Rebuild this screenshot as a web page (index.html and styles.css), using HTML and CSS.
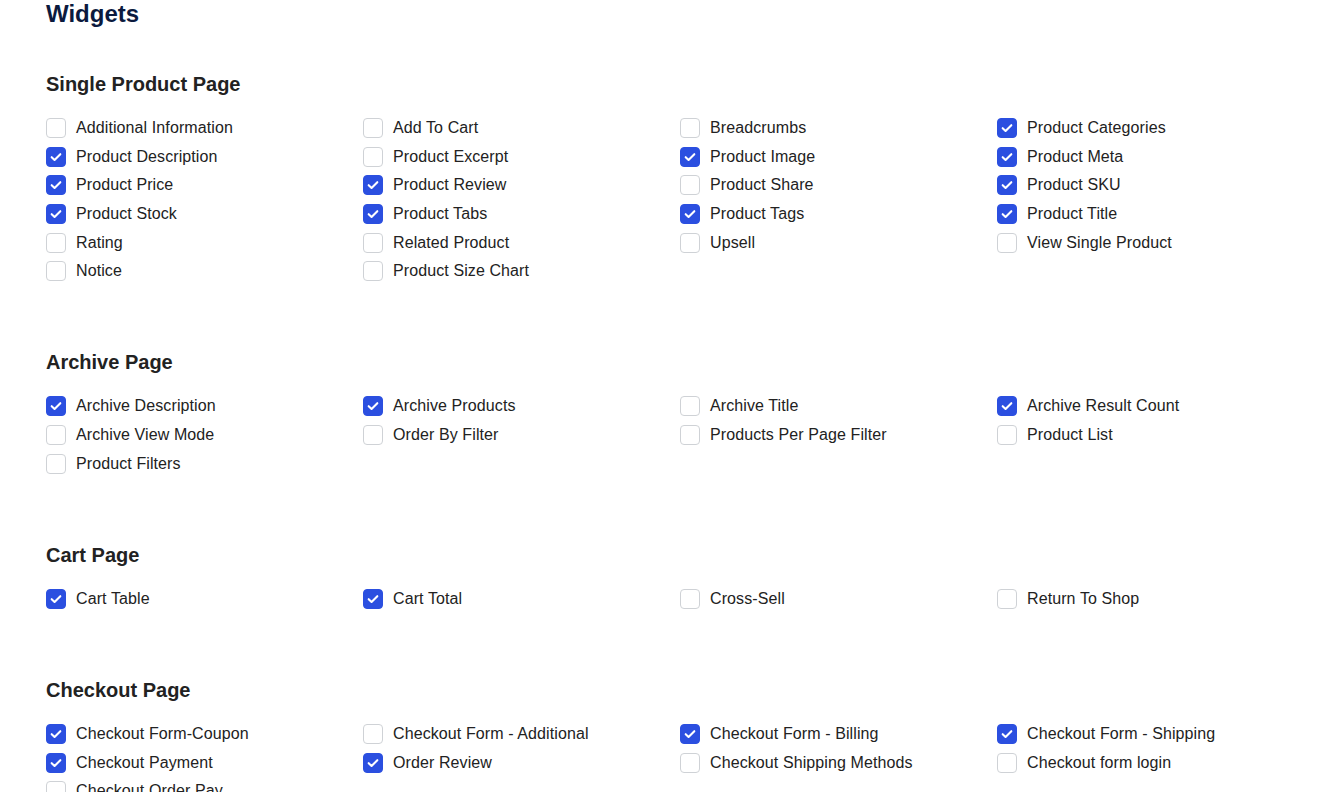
FILE: index.html
```html
<!DOCTYPE html>
<html>
<head>
<meta charset="utf-8">
<link rel="stylesheet" href="styles.css">
</head>
<body>
<div class="page">
  <h1 class="title">Widgets</h1>

  <section class="section">
    <h2 class="heading">Single Product Page</h2>
    <div class="grid">
      <label class="item"><span class="box"></span>Additional Information</label>
      <label class="item"><span class="box"></span>Add To Cart</label>
      <label class="item"><span class="box"></span>Breadcrumbs</label>
      <label class="item"><span class="box on"><svg viewBox="0 0 20 20"><path d="M5.2 10.2l3.2 3.1 6.4-6.4"/></svg></span>Product Categories</label>

      <label class="item"><span class="box on"><svg viewBox="0 0 20 20"><path d="M5.2 10.2l3.2 3.1 6.4-6.4"/></svg></span>Product Description</label>
      <label class="item"><span class="box"></span>Product Excerpt</label>
      <label class="item"><span class="box on"><svg viewBox="0 0 20 20"><path d="M5.2 10.2l3.2 3.1 6.4-6.4"/></svg></span>Product Image</label>
      <label class="item"><span class="box on"><svg viewBox="0 0 20 20"><path d="M5.2 10.2l3.2 3.1 6.4-6.4"/></svg></span>Product Meta</label>

      <label class="item"><span class="box on"><svg viewBox="0 0 20 20"><path d="M5.2 10.2l3.2 3.1 6.4-6.4"/></svg></span>Product Price</label>
      <label class="item"><span class="box on"><svg viewBox="0 0 20 20"><path d="M5.2 10.2l3.2 3.1 6.4-6.4"/></svg></span>Product Review</label>
      <label class="item"><span class="box"></span>Product Share</label>
      <label class="item"><span class="box on"><svg viewBox="0 0 20 20"><path d="M5.2 10.2l3.2 3.1 6.4-6.4"/></svg></span>Product SKU</label>

      <label class="item"><span class="box on"><svg viewBox="0 0 20 20"><path d="M5.2 10.2l3.2 3.1 6.4-6.4"/></svg></span>Product Stock</label>
      <label class="item"><span class="box on"><svg viewBox="0 0 20 20"><path d="M5.2 10.2l3.2 3.1 6.4-6.4"/></svg></span>Product Tabs</label>
      <label class="item"><span class="box on"><svg viewBox="0 0 20 20"><path d="M5.2 10.2l3.2 3.1 6.4-6.4"/></svg></span>Product Tags</label>
      <label class="item"><span class="box on"><svg viewBox="0 0 20 20"><path d="M5.2 10.2l3.2 3.1 6.4-6.4"/></svg></span>Product Title</label>

      <label class="item"><span class="box"></span>Rating</label>
      <label class="item"><span class="box"></span>Related Product</label>
      <label class="item"><span class="box"></span>Upsell</label>
      <label class="item"><span class="box"></span>View Single Product</label>

      <label class="item"><span class="box"></span>Notice</label>
      <label class="item"><span class="box"></span>Product Size Chart</label>
    </div>
  </section>

  <section class="section">
    <h2 class="heading">Archive Page</h2>
    <div class="grid">
      <label class="item"><span class="box on"><svg viewBox="0 0 20 20"><path d="M5.2 10.2l3.2 3.1 6.4-6.4"/></svg></span>Archive Description</label>
      <label class="item"><span class="box on"><svg viewBox="0 0 20 20"><path d="M5.2 10.2l3.2 3.1 6.4-6.4"/></svg></span>Archive Products</label>
      <label class="item"><span class="box"></span>Archive Title</label>
      <label class="item"><span class="box on"><svg viewBox="0 0 20 20"><path d="M5.2 10.2l3.2 3.1 6.4-6.4"/></svg></span>Archive Result Count</label>

      <label class="item"><span class="box"></span>Archive View Mode</label>
      <label class="item"><span class="box"></span>Order By Filter</label>
      <label class="item"><span class="box"></span>Products Per Page Filter</label>
      <label class="item"><span class="box"></span>Product List</label>

      <label class="item"><span class="box"></span>Product Filters</label>
    </div>
  </section>

  <section class="section">
    <h2 class="heading">Cart Page</h2>
    <div class="grid">
      <label class="item"><span class="box on"><svg viewBox="0 0 20 20"><path d="M5.2 10.2l3.2 3.1 6.4-6.4"/></svg></span>Cart Table</label>
      <label class="item"><span class="box on"><svg viewBox="0 0 20 20"><path d="M5.2 10.2l3.2 3.1 6.4-6.4"/></svg></span>Cart Total</label>
      <label class="item"><span class="box"></span>Cross-Sell</label>
      <label class="item"><span class="box"></span>Return To Shop</label>
    </div>
  </section>

  <section class="section">
    <h2 class="heading">Checkout Page</h2>
    <div class="grid">
      <label class="item"><span class="box on"><svg viewBox="0 0 20 20"><path d="M5.2 10.2l3.2 3.1 6.4-6.4"/></svg></span>Checkout Form-Coupon</label>
      <label class="item"><span class="box"></span>Checkout Form - Additional</label>
      <label class="item"><span class="box on"><svg viewBox="0 0 20 20"><path d="M5.2 10.2l3.2 3.1 6.4-6.4"/></svg></span>Checkout Form - Billing</label>
      <label class="item"><span class="box on"><svg viewBox="0 0 20 20"><path d="M5.2 10.2l3.2 3.1 6.4-6.4"/></svg></span>Checkout Form - Shipping</label>

      <label class="item"><span class="box on"><svg viewBox="0 0 20 20"><path d="M5.2 10.2l3.2 3.1 6.4-6.4"/></svg></span>Checkout Payment</label>
      <label class="item"><span class="box on"><svg viewBox="0 0 20 20"><path d="M5.2 10.2l3.2 3.1 6.4-6.4"/></svg></span>Order Review</label>
      <label class="item"><span class="box"></span>Checkout Shipping Methods</label>
      <label class="item"><span class="box"></span>Checkout form login</label>

      <label class="item"><span class="box"></span>Checkout Order Pay</label>
    </div>
  </section>
</div>
</body>
</html>
```

FILE: styles.css
```css
html, body {
  margin: 0;
  padding: 0;
  background: #ffffff;
}

body {
  font-family: "Liberation Sans", Arial, sans-serif;
  color: #1f2328;
  overflow: hidden;
  height: 792px;
}

.page {
  padding: 0 0 0 46px;
}

.title {
  margin: 0;
  font-size: 24px;
  line-height: 28px;
  font-weight: 700;
  color: #0b1a3e;
}

.section {
  margin-top: 44px;
}

.section + .section {
  margin-top: 69px;
}

.heading {
  margin: 0 0 22px 0;
  font-size: 20px;
  line-height: 24px;
  font-weight: 700;
  color: #222222;
}

.grid {
  display: grid;
  grid-template-columns: repeat(4, 317px);
  row-gap: 8.7px;
}

.item {
  display: flex;
  align-items: center;
  gap: 10px;
  height: 20px;
  font-size: 16px;
  line-height: 20px;
  letter-spacing: 0.1px;
  color: #222222;
  white-space: nowrap;
}

.box {
  box-sizing: border-box;
  width: 20px;
  height: 20px;
  flex: none;
  border: 1px solid #cfd2d6;
  border-radius: 4px;
  background: #ffffff;
  display: flex;
}

.box.on {
  background: #2b4fe0;
  border-color: #2b4fe0;
}

.box svg {
  width: 18px;
  height: 18px;
  fill: none;
  stroke: #ffffff;
  stroke-width: 2.3;
  stroke-linecap: round;
  stroke-linejoin: round;
}
```
